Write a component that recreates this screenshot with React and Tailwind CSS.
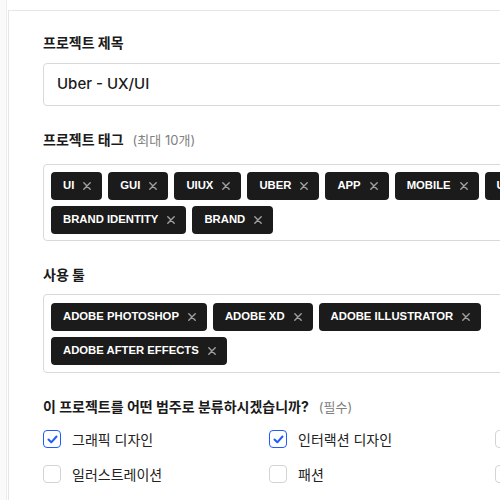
import React from 'react';

const FONT = { fontFamily: 'Inter, "Noto Sans CJK KR", sans-serif' };
const TAG_FONT = { fontFamily: '"Liberation Sans", Arial, sans-serif' };

const projectTags = ['UI', 'GUI', 'UIUX', 'UBER', 'APP', 'MOBILE', 'UX', 'BRAND IDENTITY', 'BRAND'];
const tools = ['ADOBE PHOTOSHOP', 'ADOBE XD', 'ADOBE ILLUSTRATOR', 'ADOBE AFTER EFFECTS'];

const categories = [
  { label: '그래픽 디자인', checked: true },
  { label: '인터랙션 디자인', checked: true },
  { label: '브랜딩', checked: false },
  { label: '일러스트레이션', checked: false },
  { label: '패션', checked: false },
  { label: '사진', checked: false },
];

// small gray cross used on each tag
const XIcon = () => (
  <svg width="8" height="8" viewBox="0 0 8 8" fill="none" stroke="#a0a0a0" strokeWidth="1.4" strokeLinecap="round">
    <path d="M0.8 0.8l6.4 6.4M7.2 0.8l-6.4 6.4" />
  </svg>
);

const Tag = ({ text }) => (
  <span
    className="flex items-center gap-[9px] h-[28px] pl-3 pr-[11px] rounded-[4px] bg-[#1b1b1b] text-white text-[11.3px] font-bold whitespace-nowrap"
    style={TAG_FONT}
  >
    {text}
    <XIcon />
  </span>
);

const TagBox = ({ items, className }) => (
  <div className={`flex flex-wrap gap-[6px] w-[600px] px-[7px] border border-[#d9d9d9] rounded-[4px] ${className}`}>
    {items.map((t) => (
      <Tag key={t} text={t} />
    ))}
  </div>
);

const Checkbox = ({ checked }) =>
  checked ? (
    <span className="flex items-center justify-center w-[18px] h-[18px] rounded-[4px] border-[1.5px] border-[#1f5bff] bg-white">
      <svg width="11" height="9" viewBox="0 0 11 9" fill="none" stroke="#1f5bff" strokeWidth="2" strokeLinecap="round" strokeLinejoin="round">
        <path d="M1.5 4.5l2.8 2.8L9.5 1.5" />
      </svg>
    </span>
  ) : (
    <span className="w-[18px] h-[18px] rounded-[4px] border-[1.5px] border-[#d4d4d4] bg-white" />
  );

export default function App() {
  return (
    <div className="w-[500px] h-[500px] overflow-hidden bg-white" style={FONT}>
      <div className="flex h-full">
        <div className="w-[7px] shrink-0 bg-[#fafafa] border-r border-[#ececec]" />
        <div className="mt-[10px] ml-[1px] flex-1 min-w-[700px] border-l border-t border-[#e6e6e6] pl-[34px] pt-[22px]">
          <div className="text-[14px] leading-[20px] font-bold text-[#1a1a1a]">프로젝트 제목</div>
          <div className="mt-[10px] w-[600px] h-[43px] flex items-center px-[13px] border border-[#d9d9d9] rounded-[4px] text-[15px] font-medium text-[#1a1a1a]">
            Uber - UX/UI
          </div>

          <div className="mt-[24px] flex items-baseline gap-[9px]">
            <span className="text-[14px] leading-[20px] font-bold text-[#1a1a1a]">프로젝트 태그</span>
            <span className="text-[13px] text-[#808080]">(최대 10개)</span>
          </div>
          <div className="mt-[13px]">
            <TagBox items={projectTags} className="pt-[7px] pb-[6px]" />
          </div>

          <div className="mt-[24px] text-[14px] leading-[20px] font-bold text-[#1a1a1a]">사용 툴</div>
          <div className="mt-[9px]">
            <TagBox items={tools} className="pt-[8px] pb-[7px]" />
          </div>

          <div className="mt-[24px] flex items-baseline gap-[10px]">
            <span className="text-[14px] leading-[20px] font-bold text-[#1a1a1a]">이 프로젝트를 어떤 범주로 분류하시겠습니까?</span>
            <span className="text-[13px] text-[#808080]">(필수)</span>
          </div>
          <div className="mt-[13px] grid grid-cols-[226px_226px_226px] gap-y-[17px]">
            {categories.map((c) => (
              <label key={c.label} className="flex items-center gap-[11px] h-[18px] text-[14px] text-[#222]">
                <Checkbox checked={c.checked} />
                {c.label}
              </label>
            ))}
          </div>
        </div>
      </div>
    </div>
  );
}
